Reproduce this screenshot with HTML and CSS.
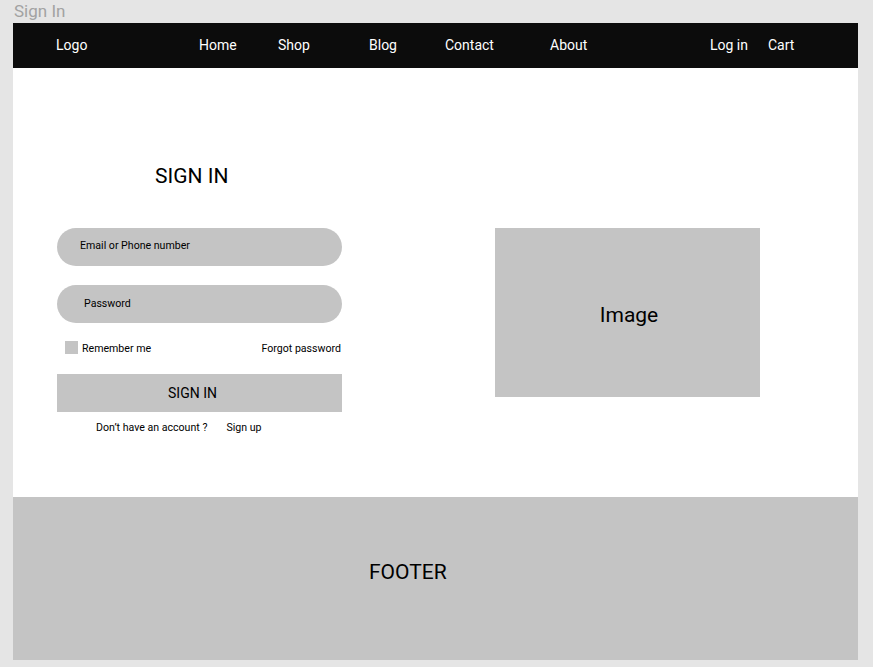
FILE: index.html
```html
<!DOCTYPE html>
<html>
<head>
<meta charset="utf-8">
<link rel="stylesheet" href="styles.css">
</head>
<body>
<div class="label">Sign In</div>
<div class="frame">
  <nav class="nav">
    <span>Logo</span>
    <span>Home</span>
    <span>Shop</span>
    <span>Blog</span>
    <span>Contact</span>
    <span>About</span>
    <span>Log in</span>
    <span>Cart</span>
  </nav>
  <main class="main">
    <section class="form">
      <h1 class="title">SIGN IN</h1>
      <div class="field field-email">Email or Phone number</div>
      <div class="field field-pass">Password</div>
      <div class="row">
        <label class="remember"><span class="box"></span>Remember me</label>
        <span>Forgot password</span>
      </div>
      <div class="btn">SIGN IN</div>
      <div class="signup"><span>Don’t have an account ?</span><span>Sign up</span></div>
    </section>
    <div class="image">Image</div>
  </main>
  <footer class="footer">FOOTER</footer>
</div>
</body>
</html>
```
FILE: styles.css
```css
* { box-sizing: border-box; margin: 0; padding: 0; }
body {
  background: #e5e5e5;
  font-family: Roboto, "Liberation Sans", sans-serif;
  color: #000;
  width: 873px;
  height: 667px;
  overflow: hidden;
}
.label {
  height: 23px;
  padding-left: 14px;
  font-size: 17px;
  line-height: 22px;
  color: #a2a2a2;
}
.frame {
  margin-left: 13px;
  width: 845px;
  height: 637px;
  background: #fff;
  display: flex;
  flex-direction: column;
}
.nav {
  height: 45px;
  background: #0c0c0c;
  color: #fff;
  font-size: 14px;
  display: grid;
  grid-template-columns: 143px 79px 91px 76px 105px 160px 58px auto;
  align-items: center;
  padding-left: 43px;
  padding-bottom: 2px;
}
.main {
  height: 429px;
  display: flex;
  align-items: flex-start;
  padding-left: 44px;
}
.form {
  width: 285px;
  padding-top: 96px;
  display: flex;
  flex-direction: column;
}
.title {
  font-weight: 400;
  font-size: 21px;
  line-height: 24px;
  padding-left: 98px;
  margin-bottom: 40px;
}
.field {
  height: 38px;
  border-radius: 19px;
  background: #c4c4c4;
  font-size: 10.6px;
  display: flex;
  align-items: center;
  padding-left: 23px;
}
.field-email { margin-bottom: 19px; padding-bottom: 3px; }
.field-pass { padding-left: 27px; margin-bottom: 18px; padding-bottom: 2px; }
.row {
  height: 13px;
  display: flex;
  align-items: center;
  justify-content: space-between;
  font-size: 10.6px;
  padding-left: 8px;
  padding-right: 1px;
  margin-bottom: 20px;
}
.remember { display: flex; align-items: center; gap: 4px; }
.remember, .row > span { padding-top: 1px; }
.box { width: 13px; height: 13px; background: #c4c4c4; display: block; margin-top: -1px; }
.btn {
  height: 38px;
  background: #c4c4c4;
  font-size: 14px;
  display: flex;
  align-items: center;
  justify-content: center;
  padding-right: 14px;
  margin-bottom: 9px;
}
.signup {
  font-size: 10.6px;
  line-height: 13px;
  display: flex;
  gap: 19px;
  padding-left: 39px;
}
.image {
  margin-top: 160px;
  margin-left: 153px;
  width: 265px;
  height: 169px;
  background: #c4c4c4;
  font-size: 21px;
  display: flex;
  align-items: center;
  justify-content: center;
  padding-top: 4px;
  padding-left: 3px;
}
.footer {
  height: 163px;
  background: #c4c4c4;
  font-size: 21px;
  padding-left: 356px;
  padding-top: 63px;
  line-height: 24px;
}
```
